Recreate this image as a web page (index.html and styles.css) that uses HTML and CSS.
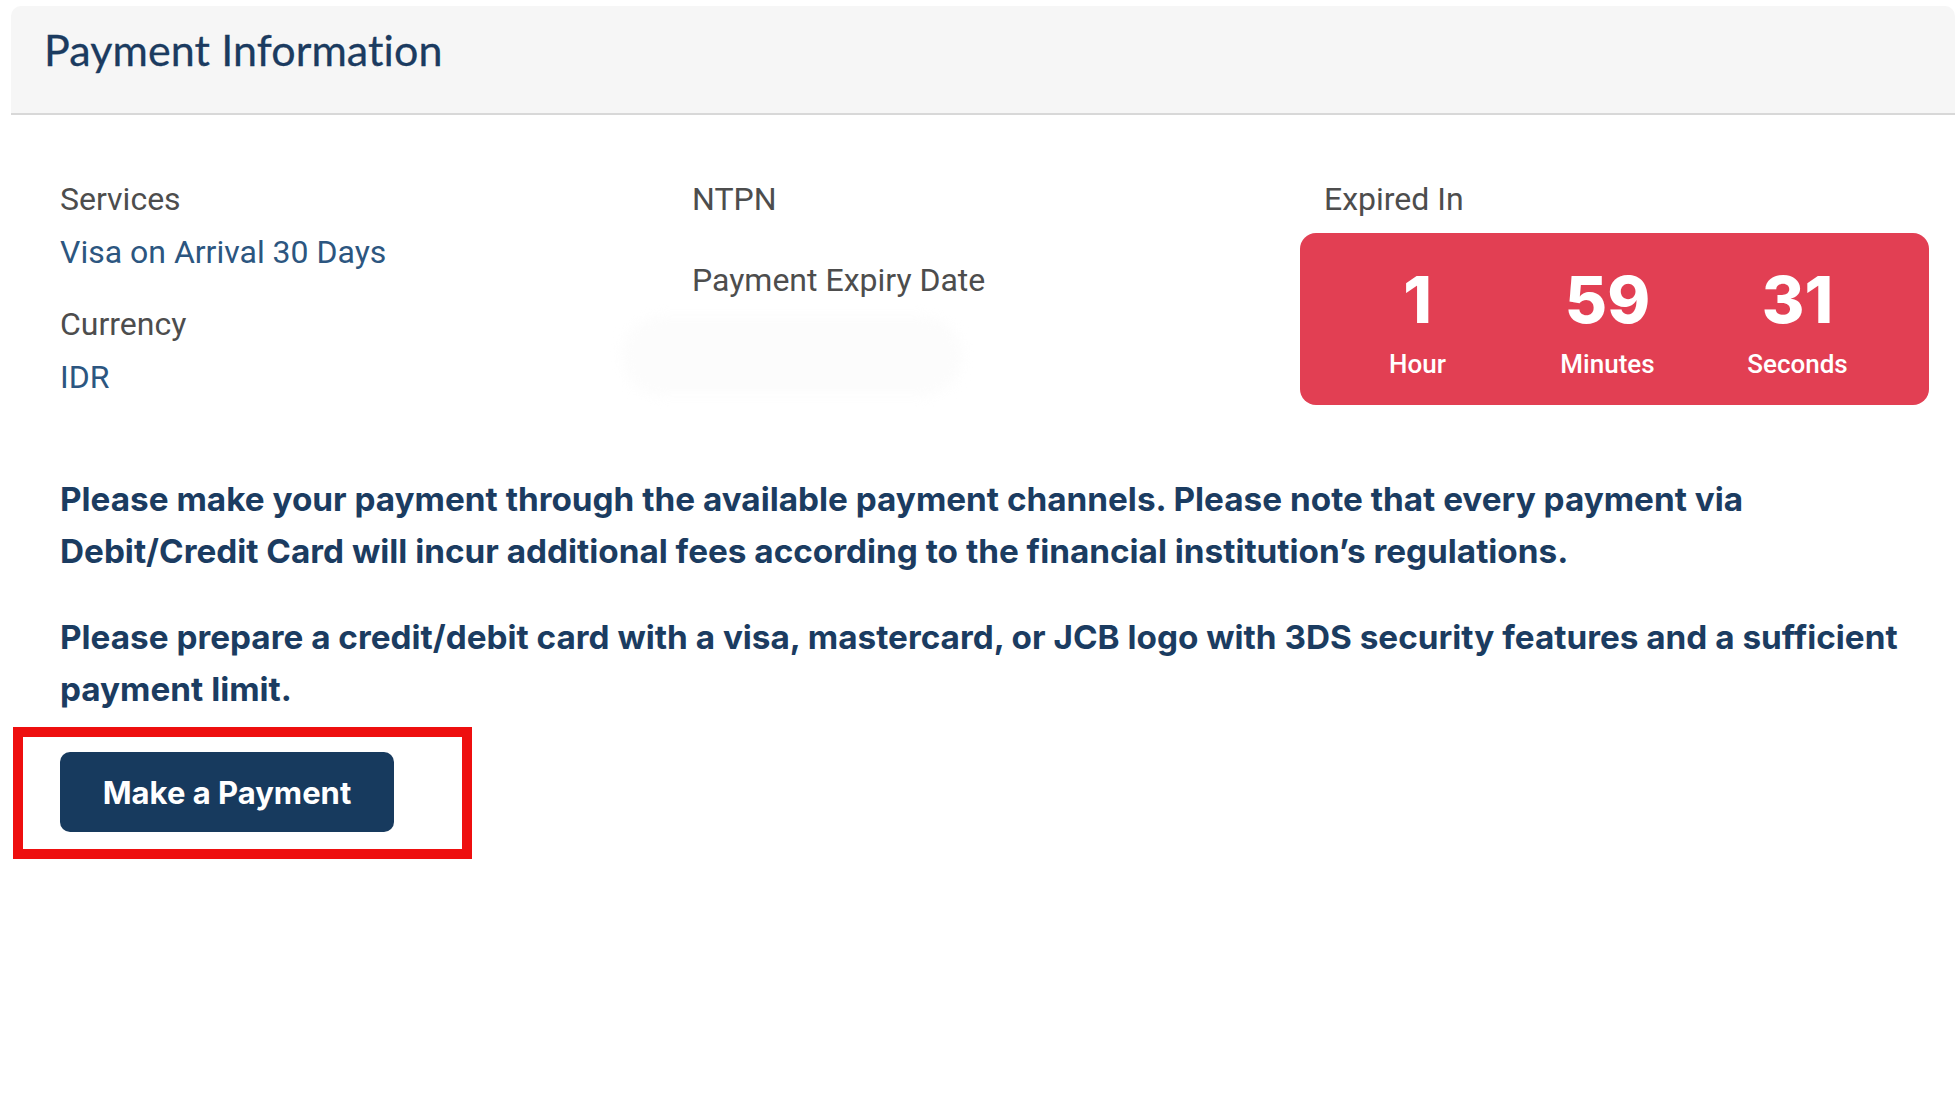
FILE: index.html
```html
<!DOCTYPE html>
<html lang="en">
<head>
<meta charset="utf-8">
<title>Payment Information</title>
<link rel="stylesheet" href="styles.css">
</head>
<body>
<section class="card">
  <header class="card-header">
    <h1 class="card-title">Payment Information</h1>
  </header>
  <div class="card-body">
    <div class="info-grid">
      <div class="info-col">
        <div class="label">Services</div>
        <div class="value">Visa on Arrival 30 Days</div>
        <div class="label label-next">Currency</div>
        <div class="value">IDR</div>
      </div>
      <div class="info-col">
        <div class="label">NTPN</div>
        <div class="label label-expiry">Payment Expiry Date</div>
        <div class="blurred"></div>
      </div>
      <div class="info-col info-col-timer">
        <div class="label label-timer">Expired In</div>
        <div class="timer">
          <div class="timer-unit">
            <span class="timer-num">1</span>
            <span class="timer-lbl">Hour</span>
          </div>
          <div class="timer-unit">
            <span class="timer-num">59</span>
            <span class="timer-lbl">Minutes</span>
          </div>
          <div class="timer-unit">
            <span class="timer-num">31</span>
            <span class="timer-lbl">Seconds</span>
          </div>
        </div>
      </div>
    </div>
    <p class="notice">Please make your payment through the available payment channels. Please note that every payment via Debit/Credit Card will incur additional fees according to the financial institution’s regulations.</p>
    <p class="notice notice-second">Please prepare a credit/debit card with a visa, mastercard, or JCB logo with 3DS security features and a sufficient payment limit.</p>
    <div class="action">
      <button class="pay-btn" type="button">Make a Payment</button>
    </div>
  </div>
</section>
</body>
</html>
```

FILE: styles.css
```css
html, body {
  margin: 0;
  padding: 0;
  background: #ffffff;
}

body {
  font-family: Roboto, "Liberation Sans", sans-serif;
  width: 1960px;
  height: 1103px;
  overflow: hidden;
}

.card {
  margin: 6px 5px 0 11px;
}

.card-header {
  height: 107px;
  box-sizing: content-box;
  background: #f6f6f6;
  border-bottom: 2px solid #d8d8d8;
  border-radius: 10px 10px 0 0;
  padding-left: 33px;
}

.card-title {
  margin: 0;
  padding-top: 18px;
  font-family: Lato, "Open Sans", sans-serif;
  font-weight: 400;
  font-size: 43px;
  line-height: 52px;
  color: #1b3b60;
  letter-spacing: 0.1px;
  -webkit-text-stroke: 0.3px #1b3b60;
}

.card-body {
  padding: 66px 26px 0 49px;
}

.info-grid {
  display: grid;
  grid-template-columns: 632px 608px 629px;
}

.info-col {
  display: flex;
  flex-direction: column;
  align-items: flex-start;
}

.label {
  font-size: 32px;
  line-height: 36px;
  color: #4d4d4d;
}

.value {
  font-size: 32px;
  line-height: 36px;
  color: #2c5680;
  margin-top: 17px;
}

.label-next {
  margin-top: 36px;
}

.label-expiry {
  margin-top: 45px;
}

.blurred {
  margin-top: 18px;
  margin-left: -70px;
  width: 340px;
  height: 80px;
  border-radius: 40px;
  background: #fcfcfc;
  filter: blur(6px);
}

.info-col-timer {
  align-items: stretch;
}

.label-timer {
  padding-left: 24px;
}

.timer {
  margin-top: 16px;
  height: 172px;
  box-sizing: border-box;
  background: #e23f53;
  border-radius: 16px;
  display: flex;
  justify-content: center;
  padding: 35px 14px 0 0;
}

.timer-unit {
  width: 190px;
  display: flex;
  flex-direction: column;
  align-items: center;
  color: #ffffff;
}

.timer-num {
  font-family: Inter, Roboto, sans-serif;
  font-weight: 800;
  font-size: 65px;
  line-height: 64px;
}

.timer-lbl {
  margin-top: 17px;
  font-size: 26px;
  line-height: 31px;
  font-weight: 500;
}

.notice {
  margin: 68px 0 0 0;
  font-family: Inter, Roboto, sans-serif;
  font-weight: 700;
  font-size: 33.3px;
  line-height: 52px;
  color: #1b3c61;
}

.notice-second {
  margin-top: 34px;
}

.action {
  position: relative;
  margin-top: 37px;
  width: 334px;
}

.action::after {
  content: "";
  position: absolute;
  left: -47px;
  top: -25px;
  right: -78px;
  bottom: -27px;
  border: 10px solid #ee0f0f;
  pointer-events: none;
}

.pay-btn {
  display: block;
  width: 334px;
  height: 80px;
  border: 0;
  border-radius: 10px;
  background: #173a5e;
  color: #ffffff;
  font-family: Inter, Roboto, sans-serif;
  font-weight: 700;
  font-size: 31px;
  padding: 0;
  cursor: pointer;
}
```
